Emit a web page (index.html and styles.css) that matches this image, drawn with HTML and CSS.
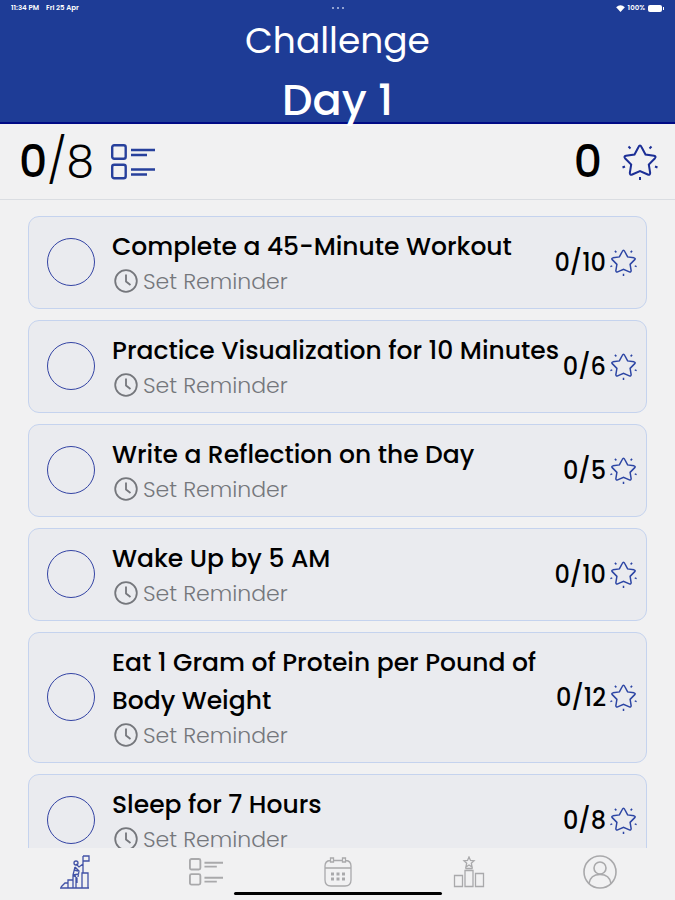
FILE: index.html
```html
<!DOCTYPE html>
<html lang="en">
<head>
    <meta charset="UTF-8">
    <meta name="viewport" content="width=device-width, initial-scale=1.0">
    <title>Challenge - Day 1</title>
    <link rel="stylesheet" href="styles.css">
</head>
<body>
    <!-- Shared icons -->
    <svg class="sprite" aria-hidden="true">
        <symbol id="star" viewBox="0 0 36 36">
            <path d="M18 1.500Q18.800 1.500 19.500 3L23.500 10.500L32 11.800Q34.500 12.500 33 14.200L26.800 20.500L28.200 29Q28 31.500 25.800 30.500L18 27L10.200 30.500Q8 31.500 7.800 29L9.200 20.500L3 14.200Q1.500 12.500 4 11.800L12.500 10.500L16.500 3Q17.200 1.500 18 1.500Z"/>
            <path d="M6.500 2.500l2 2M29.500 2.500l-2 2M.5 23.500l2.500-1M35.500 23.500l-2.500-1M18 33v3"/>
        </symbol>
        <symbol id="list" viewBox="0 0 44 36">
            <rect x="1.2" y="1.2" width="13.5" height="13.5" rx="2"/>
            <rect x="1.2" y="20.8" width="13.5" height="13.5" rx="2"/>
            <path d="M20 6h24M20 11h16M20 25.500h24M20 30.500h16"/>
        </symbol>
        <symbol id="clock" viewBox="0 0 24 24">
            <circle cx="12" cy="12" r="10.800"/>
            <path d="M12 5.500v7l4.500 3.500"/>
        </symbol>
    </svg>

    <header class="header">
        <div class="status-bar">
            <div class="status-left"><span>11:34 PM</span><span>Fri 25 Apr</span></div>
            <div class="dots"><i></i><i></i><i></i></div>
            <div class="status-right">
                <svg class="wifi" viewBox="0 0 10 8"><path d="M0 2.500Q5-2 10 2.500L5 8Z"/></svg>
                <span>100%</span>
                <svg class="battery" viewBox="0 0 17 7"><rect width="14" height="7" rx="2"/><rect x="15" y="2" width="1" height="3"/></svg>
            </div>
        </div>
        <h1>Challenge</h1>
        <h2>Day 1</h2>
    </header>

    <section class="stats">
        <div class="stat stat-done"><span><strong>0</strong>/8</span><svg class="icon-list"><use href="#list"/></svg></div>
        <div class="stat"><strong>0</strong><svg class="icon-star"><use href="#star"/></svg></div>
    </section>

    <main class="tasks">
        <div class="task">
            <input type="checkbox" id="task1">
            <div class="task-body">
                <label for="task1">Complete a 45-Minute Workout</label>
                <button type="button"><svg><use href="#clock"/></svg>Set Reminder</button>
            </div>
            <div class="score">0/10<svg><use href="#star"/></svg></div>
        </div>
        <div class="task">
            <input type="checkbox" id="task2">
            <div class="task-body">
                <label for="task2">Practice Visualization for 10 Minutes</label>
                <button type="button"><svg><use href="#clock"/></svg>Set Reminder</button>
            </div>
            <div class="score">0/6<svg><use href="#star"/></svg></div>
        </div>
        <div class="task">
            <input type="checkbox" id="task3">
            <div class="task-body">
                <label for="task3">Write a Reflection on the Day</label>
                <button type="button"><svg><use href="#clock"/></svg>Set Reminder</button>
            </div>
            <div class="score">0/5<svg><use href="#star"/></svg></div>
        </div>
        <div class="task">
            <input type="checkbox" id="task4">
            <div class="task-body">
                <label for="task4">Wake Up by 5 AM</label>
                <button type="button"><svg><use href="#clock"/></svg>Set Reminder</button>
            </div>
            <div class="score">0/10<svg><use href="#star"/></svg></div>
        </div>
        <div class="task">
            <input type="checkbox" id="task5">
            <div class="task-body">
                <label for="task5">Eat 1 Gram of Protein per Pound of Body Weight</label>
                <button type="button"><svg><use href="#clock"/></svg>Set Reminder</button>
            </div>
            <div class="score">0/12<svg><use href="#star"/></svg></div>
        </div>
        <div class="task">
            <input type="checkbox" id="task6">
            <div class="task-body">
                <label for="task6">Sleep for 7 Hours</label>
                <button type="button"><svg><use href="#clock"/></svg>Set Reminder</button>
            </div>
            <div class="score">0/8<svg><use href="#star"/></svg></div>
        </div>
    </main>

    <nav class="tabs">
        <a href="#challenge" class="active" aria-label="Challenge">
            <svg width="32" height="36" viewBox="0 0 32 36">
                <path d="M1 34h29M2 33l4-4h3v-3h5v-4h3M9 29v5M14 26v8M17 24v10M23 34V19h6v15M24 19V2M24 2h6v5h-6M17 10l3 3 4-3M16 13l4 4-1 6M16 13l-2 8 4 3v5M14 21l6-1M15 16l4 1"/>
                <circle cx="17" cy="9" r="2"/>
            </svg>
        </a>
        <a href="#tasks" aria-label="Tasks"><svg class="tab-list"><use href="#list"/></svg></a>
        <a href="#calendar" aria-label="Calendar">
            <svg width="28" height="30" viewBox="0 0 28 30">
                <path d="M6 3.500Q1 4 1 9v14q0 6 6 6h14q6 0 6-6V9q0-5-5-5.500M10 3.500h8M1 11h26M6.500 1h3v4h-3zM18.500 1h3v4h-3z"/>
                <path class="cal-days" d="M7 17h3M12.500 17h3M18 17h3M7 22h3M12.500 22h3M18 22h3"/>
            </svg>
        </a>
        <a href="#leaderboard" aria-label="Leaderboard">
            <svg width="32" height="32" viewBox="0 0 32 32">
                <path d="M1.500 19.500h8v11h-8zM12 14.500h8v16h-8zM22.500 17.500h8v13h-8zM12.500 12.500h7M16 1l1.500 3.500 3.500.3-2.700 2.400.8 3.800-3.100-2-3.100 2 .8-3.800L11 4.800l3.500-.3z"/>
            </svg>
        </a>
        <a href="#profile" aria-label="Profile">
            <svg class="profile" width="34" height="34" viewBox="0 0 34 34">
                <circle cx="17" cy="17" r="16"/>
                <circle cx="17" cy="13" r="6"/>
                <path d="M6 28.500C7 22 11 19.500 17 19.500S27 22 28 28.500"/>
            </svg>
        </a>
        <div class="home-bar"></div>
    </nav>
</body>
</html>
```
FILE: styles.css
```css
* {
    box-sizing: border-box;
}

body {
    margin: 0;
    height: 100vh;
    display: flex;
    flex-direction: column;
    overflow: hidden;
    font-family: Poppins, Inter, sans-serif;
    background: #f1f1f2;
    color: #000;
}

svg {
    fill: none;
    stroke: currentColor;
    flex-shrink: 0;
}

.sprite {
    position: absolute;
    width: 0;
    height: 0;
}

.header {
    background: #1e3c96;
    color: #fff;
    border-bottom: 2px solid #000a85;
    text-align: center;
}

.status-bar {
    display: grid;
    grid-template-columns: 1fr auto 1fr;
    align-items: center;
    height: 16px;
    padding: 0 10px 0 11px;
    font-size: 7px;
    font-weight: 600;
}

.status-left,
.status-right,
.dots {
    display: flex;
    align-items: center;
}

.status-left {
    gap: 7px;
}

.status-right {
    gap: 3px;
    justify-content: flex-end;
}

.status-right svg {
    fill: #fff;
    stroke: none;
}

.wifi {
    width: 9px;
    height: 7px;
}

.battery {
    width: 17px;
    height: 7px;
}

.dots {
    gap: 3px;
}

.dots i {
    width: 2px;
    height: 2px;
    border-radius: 50%;
    background: #b9c4e6;
}

h1,
h2 {
    margin: 0;
}

h1 {
    font-size: 36px;
    font-weight: 400;
    line-height: 50px;
}

h2 {
    height: 56px;
    font-size: 43px;
    font-weight: 500;
    line-height: 68px;
}

.stats {
    display: flex;
    justify-content: space-between;
    align-items: center;
    height: 76px;
    padding: 0 17px 0 19px;
    border-bottom: 1px solid #dadde2;
    font-size: 44px;
    font-weight: 300;
}

.stat {
    display: flex;
    align-items: center;
    gap: 20px;
}

.stat-done {
    gap: 17px;
}

.stat strong {
    font-weight: 500;
}

.icon-list {
    width: 44px;
    height: 36px;
    color: #27409c;
    stroke-width: 2.4;
}

.icon-star {
    width: 36px;
    height: 36px;
    color: #1c2f96;
    stroke-width: 2;
}

.tasks {
    flex: 1;
    min-height: 0;
    overflow: hidden;
    display: flex;
    flex-direction: column;
    gap: 11px;
    padding: 16px 28px 0;
}

.task {
    display: flex;
    align-items: center;
    flex-shrink: 0;
    padding: 11px 9px 12px 18px;
    border: 1px solid #c5d3ee;
    border-radius: 11px;
    background: #eaebef;
}

.task input {
    appearance: none;
    flex-shrink: 0;
    width: 48px;
    height: 48px;
    margin: 0 17px 0 0;
    border: 1px solid #3444a4;
    border-radius: 50%;
}

.task input:checked {
    background: #1e3c96;
}

.task-body {
    flex: 1;
    min-width: 0;
}

.task label {
    display: block;
    font-size: 25px;
    font-weight: 500;
    line-height: 38px;
}

.task button {
    display: flex;
    align-items: center;
    gap: 5px;
    height: 30px;
    padding: 0 0 0 2px;
    border: 0;
    background: none;
    font: inherit;
    font-size: 22px;
    font-weight: 300;
    color: #75777c;
    cursor: pointer;
}

.task button svg {
    width: 24px;
    height: 24px;
    stroke-width: 1.8;
}

.score {
    display: flex;
    align-items: center;
    gap: 4px;
    font-size: 24px;
    font-weight: 500;
}

.score svg {
    width: 27px;
    height: 27px;
    color: #2c45a4;
    stroke-width: 2;
}

.tabs {
    position: relative;
    display: flex;
    height: 52px;
    padding: 0 9px;
    color: #a9a9ab;
}

.tabs a {
    flex: 1;
    display: flex;
    align-items: center;
    justify-content: center;
    height: 48px;
    color: inherit;
}

.tabs svg {
    stroke-width: 1.3;
}

.tabs .active {
    color: #4152a6;
}

.tabs .tab-list {
    width: 34px;
    height: 28px;
    stroke-width: 2.4;
}

.tabs .cal-days {
    stroke-width: 3;
}

.tabs .profile {
    stroke-width: 1.6;
}

.home-bar {
    position: absolute;
    bottom: 5px;
    left: 50%;
    width: 208px;
    height: 3px;
    border-radius: 2px;
    background: #000;
    transform: translateX(-50%);
}
```
